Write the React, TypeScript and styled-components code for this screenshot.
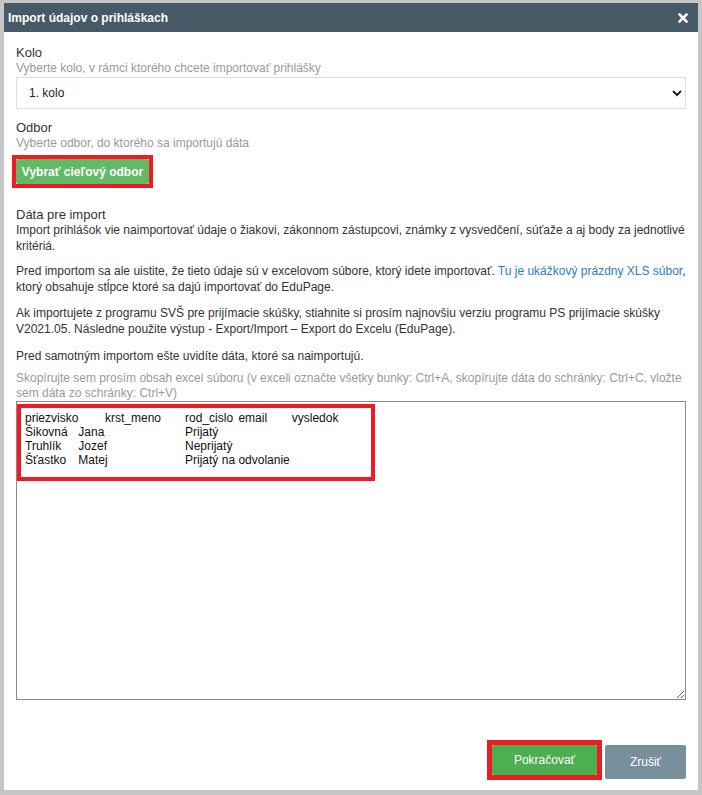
import React from "react";
import styled, { createGlobalStyle } from "styled-components";

const GlobalStyle = createGlobalStyle`
  html, body {
    margin: 0;
    padding: 0;
    background: #c6c6c6;
    font-family: "Liberation Sans", Arial, sans-serif;
  }
`;

const Dialog = styled.div`
  margin: 3px 4px 0 4px;
  height: 787px;
  background: #fff;
  display: flex;
  flex-direction: column;
  box-sizing: border-box;
`;

const Header = styled.div`
  height: 29px;
  background: #465a65;
  color: #fff;
  display: flex;
  align-items: center;
  justify-content: space-between;
  padding: 0 10px 0 4px;
  font-weight: bold;
  font-size: 12px;
`;

const CloseButton = styled.button`
  border: 0;
  background: none;
  padding: 0;
  display: flex;
  cursor: pointer;
`;

const Body = styled.div`
  flex: 1;
  padding: 13px 12px 0 12px;
  display: flex;
  flex-direction: column;
`;

const Label = styled.div<{ $top?: number }>`
  font-size: 13px;
  line-height: 16px;
  color: #333;
  margin-top: ${(p) => p.$top ?? 0}px;
`;

const Hint = styled.div<{ $top?: number }>`
  font-size: 12px;
  line-height: 15px;
  color: #9a9a9a;
  margin-top: ${(p) => p.$top ?? 0}px;
`;

const Select = styled.select`
  margin-top: 1px;
  height: 32px;
  width: 100%;
  border: 1px solid #ddd;
  border-radius: 0;
  background: #fff;
  font-family: "Liberation Sans", Arial, sans-serif;
  font-size: 12px;
  color: #222;
  padding: 0 6px 0 8px;
  outline: none;
`;

const Marked = styled.div<{ $w: number; $top?: number }>`
  align-self: flex-start;
  display: flex;
  outline: ${(p) => p.$w}px solid #ed1c24;
  margin-top: ${(p) => p.$top ?? 0}px;
`;

const Button = styled.button<{ $bg: string; $bold?: boolean; $w: number; $h: number }>`
  width: ${(p) => p.$w}px;
  height: ${(p) => p.$h}px;
  padding: 0;
  border: 0;
  border-radius: 2px;
  background: ${(p) => p.$bg};
  color: #fff;
  font-family: "Liberation Sans", Arial, sans-serif;
  font-size: 12px;
  font-weight: ${(p) => (p.$bold ? "bold" : "normal")};
  white-space: nowrap;
  cursor: pointer;
  display: flex;
  align-items: center;
  justify-content: center;
`;

const Text = styled.p<{ $top?: number }>`
  margin: ${(p) => p.$top ?? 0}px 0 0 0;
  font-size: 12px;
  line-height: 15.6px;
  color: #333;
`;

const Link = styled.a`
  color: #2f7cbf;
  text-decoration: none;
`;

const AreaWrap = styled.div`
  position: relative;
`;

const Area = styled.textarea`
  display: block;
  width: 100%;
  height: 299px;
  box-sizing: border-box;
  border: 1px solid #8a8a8a;
  border-radius: 0;
  padding: 9px 8px;
  font-family: "Liberation Sans", Arial, sans-serif;
  font-size: 12px;
  color: #111;
  resize: vertical;
  outline: none;
  tab-size: 8;
`;

const AreaMark = styled.div`
  position: absolute;
  left: 1px;
  top: 3px;
  width: 358px;
  height: 77px;
  box-sizing: border-box;
  border: 4px solid #ed1c24;
  pointer-events: none;
`;

const Footer = styled.div`
  display: flex;
  justify-content: flex-end;
  align-items: center;
  gap: 8px;
  padding: 0 12px 11px 12px;
`;

const data =
  "priezvisko\tkrst_meno\trod_cislo\temail\tvysledok\n" +
  "Šikovná\tJana\t\t\tPrijatý\n" +
  "Truhlík\tJozef\t\t\tNeprijatý\n" +
  "Šťastko\tMatej\t\t\tPrijatý na odvolanie";

export default function App() {
  return (
    <>
      <GlobalStyle />
      <Dialog>
        <Header>
          <span>Import údajov o prihláškach</span>
          <CloseButton aria-label="Zavrieť">
            <svg width="10" height="10" viewBox="0 0 10 10">
              <path d="M1.5 1.5 L8.5 8.5 M8.5 1.5 L1.5 8.5" stroke="#fff" strokeWidth="2.6" strokeLinecap="square" />
            </svg>
          </CloseButton>
        </Header>
        <Body>
          <Label>Kolo</Label>
          <Hint>Vyberte kolo, v rámci ktorého chcete importovať prihlášky</Hint>
          <Select defaultValue="1">
            <option value="1">1. kolo</option>
            <option value="2">2. kolo</option>
          </Select>

          <Label $top={11}>Odbor</Label>
          <Hint>Vyberte odbor, do ktorého sa importujú dáta</Hint>
          <Marked $w={4} $top={8}>
            <Button $bg="#62b966" $bold $w={133} $h={25}>
              Vybrať cieľový odbor
            </Button>
          </Marked>

          <Label $top={23}>Dáta pre import</Label>
          <Text>
            Import prihlášok vie naimportovať údaje o žiakovi, zákonnom zástupcovi, známky z vysvedčení, súťaže a aj body za jednotlivé kritériá.
          </Text>
          <Text $top={10}>
            Pred importom sa ale uistite, že tieto údaje sú v excelovom súbore, ktorý idete importovať.{" "}
            <Link href="#">Tu je ukážkový prázdny XLS súbor</Link>, ktorý obsahuje stĺpce ktoré sa dajú importovať do EduPage.
          </Text>
          <Text $top={11}>
            Ak importujete z programu SVŠ pre prijímacie skúšky, stiahnite si prosím najnovšiu verziu programu PS prijímacie skúšky V2021.05. Následne použite výstup - Export/Import – Export do Excelu (EduPage).
          </Text>
          <Text $top={11}>Pred samotným importom ešte uvidíte dáta, ktoré sa naimportujú.</Text>
          <Hint $top={7}>
            Skopírujte sem prosím obsah excel súboru (v exceli označte všetky bunky: Ctrl+A, skopírujte dáta do schránky: Ctrl+C, vložte sem dáta zo schránky: Ctrl+V)
          </Hint>
          <AreaWrap>
            <Area defaultValue={data} spellCheck={false} />
            <AreaMark />
          </AreaWrap>
        </Body>
        <Footer>
          <Marked $w={5}>
            <Button $bg="#4caf50" $w={105} $h={30}>
              Pokračovať
            </Button>
          </Marked>
          <Button $bg="#78909c" $w={81} $h={34}>
            Zrušiť
          </Button>
        </Footer>
      </Dialog>
    </>
  );
}
